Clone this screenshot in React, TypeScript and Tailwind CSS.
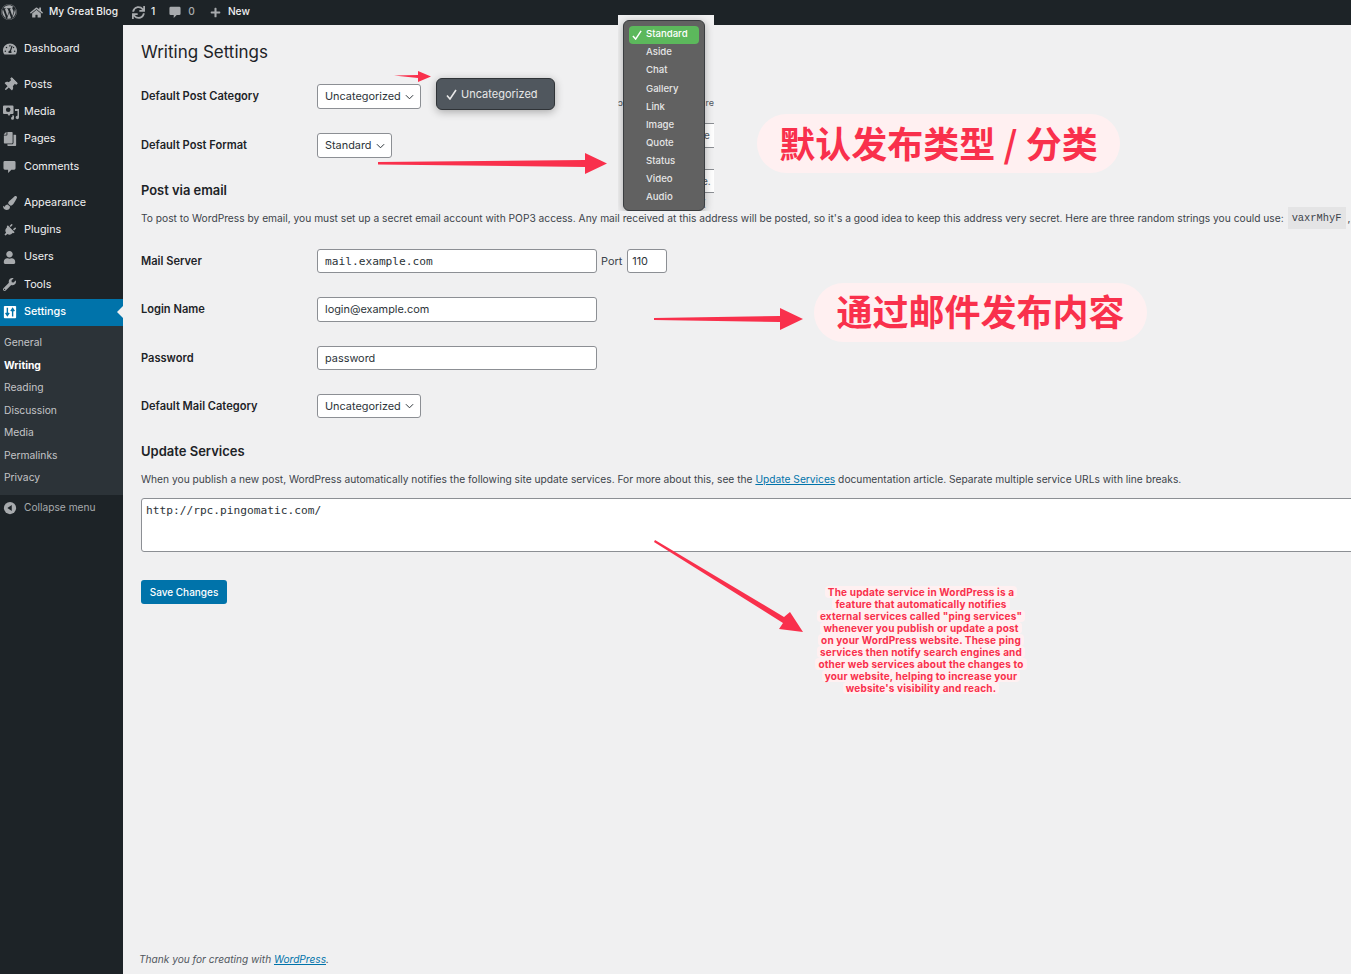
import React from 'react';
import {
  FaWordpress, FaHome, FaSync, FaPlus, FaTachometerAlt, FaThumbtack, FaCopy,
  FaPaintBrush, FaPlug, FaUser, FaWrench,
} from 'react-icons/fa';

const MediaIcon = () => (
  <svg viewBox="0 0 16 16" className="w-[16px] h-[16px]" fill="currentColor">
    <path d="M1 1.500h8.500a1 1 0 0 1 1 1V9a1 1 0 0 1-1 1H7.500L6 12 4.500 10H1a1 1 0 0 1-1-1V2.500a1 1 0 0 1 1-1zm4.200 2a2.300 2.300 0 1 0 0 4.600 2.300 2.300 0 0 0 0-4.600z" />
    <path d="M12 5h4v8.500a1.700 1.700 0 1 1-1.500-1.700V7h-2.500zM9 11.500h2v2.700a1.500 1.500 0 1 1-1.500-1.500H10v-.2H9z" />
  </svg>
);

const SettingsIcon = () => (
  <svg viewBox="0 0 16 16" className="w-[14px] h-[14px]">
    <rect x="1" y="1" width="14" height="14" rx="1" fill="#fff" />
    <path d="M5 3v8M3 9l2 3 2-3M11 13V5M9 7l2-3 2 3" fill="none" stroke="#0073aa" strokeWidth="1.600" />
  </svg>
);

const CollapseIcon = () => (
  <svg viewBox="0 0 16 16" className="w-[14px] h-[14px]">
    <circle cx="8" cy="8" r="7" fill="#a7aaad" />
    <path d="M10 4.500v7L5 8z" fill="#1d2327" />
  </svg>
);

const BubbleIcon = ({ className }: { className: string }) => (
  <svg viewBox="0 0 14 14" className={className} fill="currentColor">
    <path d="M2 1h10a1.500 1.500 0 0 1 1.500 1.500v6.500A1.500 1.500 0 0 1 12 10.500H9L5.500 14v-3.500H2A1.500 1.500 0 0 1 .5 9V2.500A1.500 1.500 0 0 1 2 1z" />
  </svg>
);

const Chevron = () => (
  <svg viewBox="0 0 10 6" className="w-[9px] h-[6px]" fill="none" stroke="#2c3338" strokeWidth="1.100">
    <path d="M1 1l4 4 4-4" />
  </svg>
);

const Tick = ({ className }: { className: string }) => (
  <svg viewBox="0 0 11 11" className={className} fill="none" stroke="currentColor" strokeWidth="1.600">
    <path d="M1 6.500l3 3.500L10 1" />
  </svg>
);

function Select({ label, className }: { label: string; className: string }) {
  return (
    <div className={`flex items-center justify-between pl-[7px] pr-[6px] bg-white border border-[#8c8f94] rounded-[3px] text-[10.900px] text-[#2c3338] ${className}`}>
      <span>{label}</span>
      <Chevron />
    </div>
  );
}

function Row({ label, children, className }: { label: string; children: React.ReactNode; className: string }) {
  return (
    <div className={`flex items-center ${className}`}>
      <div className="w-[176px] text-[11.100px] font-semibold text-[#1d2327]">{label}</div>
      {children}
    </div>
  );
}

const groups = [
  {
    gap: 'mb-[8.600px]',
    items: [{ name: 'Dashboard', icon: <FaTachometerAlt className="w-[14px] h-[14px]" /> }],
  },
  {
    gap: 'mb-[8.400px]',
    items: [
      { name: 'Posts', icon: <FaThumbtack className="w-[14px] h-[14px] rotate-45" /> },
      { name: 'Media', icon: <MediaIcon /> },
      { name: 'Pages', icon: <FaCopy className="w-[14px] h-[14px] scale-x-[-1]" /> },
      { name: 'Comments', icon: <BubbleIcon className="w-[13px] h-[13px]" /> },
    ],
  },
  {
    gap: 'mb-[9px]',
    items: [
      { name: 'Appearance', icon: <FaPaintBrush className="w-[14px] h-[14px]" /> },
      { name: 'Plugins', icon: <FaPlug className="w-[13px] h-[13px] rotate-45" /> },
      { name: 'Users', icon: <FaUser className="w-[13px] h-[13px]" /> },
      { name: 'Tools', icon: <FaWrench className="w-[13px] h-[13px]" /> },
    ],
  },
];

const subItems = ['General', 'Writing', 'Reading', 'Discussion', 'Media', 'Permalinks', 'Privacy'];
const formats = ['Aside', 'Chat', 'Gallery', 'Link', 'Image', 'Quote', 'Status', 'Video', 'Audio'];
const noteLines = [
  'The update service in WordPress is a',
  'feature that automatically notifies',
  'external services called "ping services"',
  'whenever you publish or update a post',
  'on your WordPress website. These ping',
  'services then notify search engines and',
  'other web services about the changes to',
  'your website, helping to increase your',
  "website's visibility and reach.",
];

export default function App() {
  return (
    <div className="relative w-[1351px] h-[974px] overflow-hidden flex flex-col bg-[#f0f0f1] font-['Inter',sans-serif] text-[10.230px] text-[#3c434a]">
      {/* Admin bar */}
      <div className="h-[25px] pb-[1px] shrink-0 bg-[#1d2327] flex items-center text-[10.200px] font-medium text-[#f0f0f1]">
        <FaWordpress className="w-[16px] h-[16px] ml-[1px] text-[#a7aaad]" />
        <FaHome className="w-[13px] h-[13px] ml-[13px] text-[#a7aaad]" />
        <span className="ml-[6px]">My Great Blog</span>
        <FaSync className="w-[13px] h-[13px] ml-[14px] text-[#a7aaad]" />
        <span className="ml-[6px]">1</span>
        <BubbleIcon className="w-[12px] h-[12px] ml-[14px] text-[#a7aaad]" />
        <span className="ml-[7px] text-[#a7aaad]">0</span>
        <FaPlus className="w-[11px] h-[11px] ml-[15px] text-[#a7aaad]" />
        <span className="ml-[7px]">New</span>
      </div>

      <div className="flex flex-1 min-h-0">
        {/* Sidebar */}
        <div className="w-[123px] shrink-0 bg-[#1d2327] pt-[10px] text-[10.800px] text-[#f0f0f1]">
          {groups.map((group, i) => (
            <div key={i} className={group.gap}>
              {group.items.map((item) => (
                <div key={item.name} className="h-[27.400px] flex items-center">
                  <span className="w-[24px] pl-[3px] flex justify-start text-[#a7aaad]">{item.icon}</span>
                  <span>{item.name}</span>
                </div>
              ))}
            </div>
          ))}
          <div className="relative h-[27px] -mt-[9px] flex items-center bg-[#0073aa] text-white font-medium">
            <span className="w-[24px] pl-[3px] flex">
              <SettingsIcon />
            </span>
            <span>Settings</span>
            <span className="absolute right-0 top-[7px] border-y-[6px] border-y-transparent border-r-[6px] border-r-[#f0f0f1]" />
          </div>
          <div className="bg-[#2c3338] py-[6px] text-[10.300px] text-[#c3c4c7]">
            {subItems.map((s) => (
              <div key={s} className={`h-[22.500px] flex items-center pl-[4px] ${s === 'Writing' ? 'font-bold text-white' : ''}`}>
                {s}
              </div>
            ))}
          </div>
          <div className="h-[26px] flex items-center text-[10.200px] text-[#a7aaad]">
            <span className="w-[24px] pl-[3px] flex">
              <CollapseIcon />
            </span>
            <span>Collapse menu</span>
          </div>
        </div>

        {/* Main */}
        <div className="flex-1 min-w-0 overflow-hidden pl-[18px] flex flex-col">
          <h1 className="mt-[14px] h-[26px] leading-[26px] text-[17px] text-[#1d2327]">Writing Settings</h1>
          <Row label="Default Post Category" className="mt-[19px]">
            <Select label="Uncategorized" className="w-[104px] h-[25px]" />
          </Row>
          <Row label="Default Post Format" className="mt-[24px]">
            <Select label="Standard" className="w-[75px] h-[25px]" />
          </Row>

          <h2 className="mt-[24px] h-[17px] leading-[17px] text-[12.900px] font-semibold text-[#1d2327]">Post via email</h2>
          <p className="mt-[9px] h-[20px] leading-[20px] whitespace-nowrap flex items-center">
            To post to WordPress by email, you must set up a secret email account with POP3 access. Any mail received at this address will be posted, so it's a good idea to keep this address very secret. Here are three random strings you could use:
            <code className="ml-[4px] px-[4px] py-[1px] bg-[#e4e4e5] font-['Liberation_Mono',monospace] text-[10.400px] text-[#3c434a]">vaxrMhyF</code>
            <span className="ml-[2px]">,</span>
          </p>

          <Row label="Mail Server" className="mt-[21px]">
            <input readOnly value="mail.example.com" className="w-[280px] h-[24px] px-[7px] bg-white border border-[#8c8f94] rounded-[3px] font-['DejaVu_Sans_Mono',monospace] text-[11.200px] text-[#2c3338] outline-none" />
            <span className="ml-[4px] text-[10.900px]">Port</span>
            <input readOnly value="110" className="ml-[5px] w-[40px] h-[24px] px-[4px] bg-white border border-[#8c8f94] rounded-[3px] text-[10.900px] text-[#2c3338] outline-none" />
          </Row>
          <Row label="Login Name" className="mt-[24px]">
            <input readOnly value="login@example.com" className="w-[280px] h-[25px] px-[7px] pb-[2px] bg-white border border-[#8c8f94] rounded-[3px] text-[10.900px] text-[#2c3338] outline-none" />
          </Row>
          <Row label="Password" className="mt-[24px]">
            <input readOnly value="password" className="w-[280px] h-[24px] px-[7px] bg-white border border-[#8c8f94] rounded-[3px] text-[10.900px] text-[#2c3338] outline-none" />
          </Row>
          <Row label="Default Mail Category" className="mt-[24px]">
            <Select label="Uncategorized" className="w-[104px] h-[24px]" />
          </Row>

          <h2 className="mt-[25px] h-[17px] leading-[17px] text-[13px] font-semibold text-[#1d2327]">Update Services</h2>
          <p className="mt-[9px] h-[20px] leading-[20px] whitespace-nowrap">
            When you publish a new post, WordPress automatically notifies the following site update services. For more about this, see the{' '}
            <a className="text-[#0073aa] underline">Update Services</a> documentation article. Separate multiple service URLs with line breaks.
          </p>
          <textarea
            readOnly
            value="http://rpc.pingomatic.com/"
            className="mt-[9px] w-[1300px] h-[54px] shrink-0 px-[4px] py-[4px] bg-white border border-[#8c8f94] rounded-[3px] font-['DejaVu_Sans_Mono',monospace] text-[11.200px] leading-[15px] text-[#2c3338] outline-none resize-none"
          />
          <button className="mt-[28px] w-[86px] h-[24px] bg-[#0073aa] rounded-[3px] text-white text-[10px] font-medium">Save Changes</button>

          <p className="mt-auto mb-[7px] -ml-[2px] italic text-[10.150px] text-[#50575e]">
            Thank you for creating with <a className="text-[#0073aa] underline">WordPress</a>.
          </p>
        </div>
      </div>

      {/* Pasted dropdown: category */}
      <div className="absolute left-[421px] top-[70px] w-[150px] h-[41px] bg-[#f0f0f1]">
        <div className="absolute left-[15px] top-[8px] w-[119px] h-[32px] flex items-center rounded-[6px] border border-[#2f3337] bg-[#50575e] shadow-[0_2px_8px_rgba(0,0,0,0.3)] text-[11px] text-[#e8e8e8]">
          <Tick className="ml-[9px] w-[11px] h-[11px]" />
          <span className="ml-[4px]">Uncategorized</span>
        </div>
      </div>

      {/* Pasted dropdown: format */}
      <div className="absolute left-[618px] top-[15px] w-[96px] h-[196px] bg-[#f0f0f1] overflow-hidden text-[#50575e]">
        <span className="absolute left-0 top-[81px] text-[9px]">ɔu</span>
        <span className="absolute right-0 top-[81px] text-[9px]">re</span>
        <div className="absolute right-0 top-[108px] w-[10px] h-[25px] bg-white border-y border-[#8c8f94] text-[10px] leading-[22px]">e</div>
        <div className="absolute right-0 top-[154px] w-[12px] h-[24px] bg-white border-y border-[#8c8f94] text-[10px] leading-[22px]">e.(</div>
        <div className="absolute left-[5px] top-[5px] w-[82px] h-[191px] rounded-[6px] border border-[#3a3d40] bg-[#616161] shadow-[0_2px_8px_rgba(0,0,0,0.3)] px-[5px] pt-[4.500px] text-[9.600px] font-medium text-[#e6e6e6]">
          <div className="h-[18px] flex items-center rounded-[4px] bg-[#5cb85c] text-white">
            <Tick className="ml-[3px] w-[10px] h-[10px]" />
            <span className="ml-[4px]">Standard</span>
          </div>
          {formats.map((f) => (
            <div key={f} className="h-[18.100px] flex items-center pl-[17px]">
              {f}
            </div>
          ))}
        </div>
      </div>

      {/* Annotation arrows */}
      <svg className="absolute inset-0 w-full h-full pointer-events-none" viewBox="0 0 1351 974" fill="#f9304c">
        <polygon points="394,75.500 418,75 418,71 431,76.500 418,82 418,78" />
        <polygon points="378,162 585,160 585,153 607,163.500 585,174 585,167 378,164.500" />
        <polygon points="654,318 780,316 780,308 803,319 780,330 780,322 654,320" />
        <polygon points="655,540 784,617 790,612 803,632 779,629 783,623 654,542" />
      </svg>

      {/* Annotation labels */}
      <div className="absolute left-[757px] top-[114px] w-[363px] h-[59px] pb-[3px] flex items-center justify-center rounded-full bg-[#fff0f1] font-['Noto_Sans_CJK_SC',sans-serif] font-bold text-[36px] text-[#f9304c]">
        默认发布类型 / 分类
      </div>
      <div className="absolute left-[814px] top-[283px] w-[333px] h-[59px] pb-[5px] flex items-center justify-center rounded-full bg-[#fff0f1] font-['Noto_Sans_CJK_SC',sans-serif] font-bold text-[36px] text-[#f9304c]">
        通过邮件发布内容
      </div>
      <div className="absolute left-[771px] top-[586px] w-[300px] text-center text-[10px] leading-[12px] font-bold tracking-[0.17px] text-[#f9304c]">
        {noteLines.map((line) => (
          <div key={line}>
            <span className="inline-block px-[3px] h-[12px] bg-[#fff0f1] rounded-[4px]">{line}</span>
          </div>
        ))}
      </div>
    </div>
  );
}
